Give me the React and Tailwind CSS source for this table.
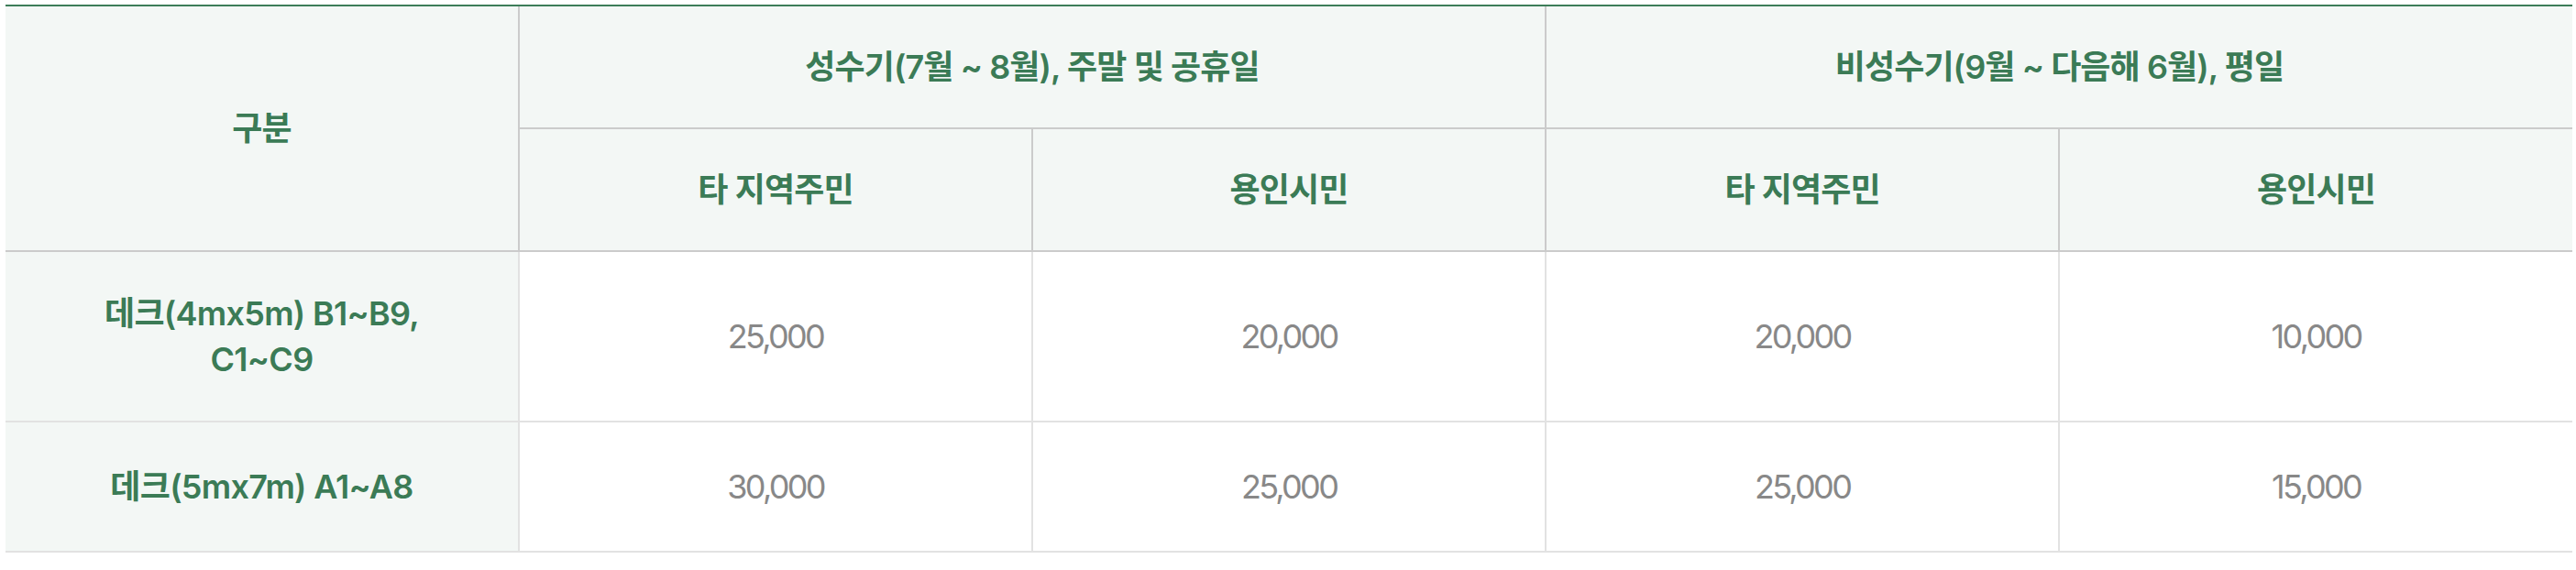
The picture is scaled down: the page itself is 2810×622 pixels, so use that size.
import React from "react";

const font = { fontFamily: '"Inter", "Noto Sans CJK KR", sans-serif' };

export default function App() {
  const thHead =
    "bg-[#f3f7f5] text-[#3b7b56] font-semibold text-[36px] leading-[1.4] tracking-[-0.025em] text-center align-middle border-b-2 border-[#cbcbcb]";
  const rowHead =
    "bg-[#f3f7f5] text-[#3b7b56] font-semibold text-[36px] leading-[1.4] tracking-[-0.02em] text-center align-middle border-b-2 border-r-2 border-[#e2e2e2]";
  const td =
    "bg-white text-[#888888] font-normal text-[36px] leading-[1.4] tracking-[-0.075em] text-center align-middle border-b-2 border-[#e2e2e2]";

  return (
    <div className="w-[2810px] h-[622px] bg-white pt-[5px] pl-[6px]" style={font}>
      <table className="w-[2800px] table-fixed border-separate border-spacing-0 border-t-2 border-[#3d7d59]">
        <colgroup>
          <col className="w-[561px]" />
          <col className="w-[560px]" />
          <col className="w-[560px]" />
          <col className="w-[560px]" />
          <col className="w-[559px]" />
        </colgroup>
        <thead>
          <tr className="h-[134px]">
            <th rowSpan={2} className={`${thHead} border-r-2`}>
              구분
            </th>
            <th colSpan={2} className={`${thHead} border-r-2`}>
              성수기(7월 ~ 8월), 주말 및 공휴일
            </th>
            <th colSpan={2} className={thHead}>
              비성수기(9월 ~ 다음해 6월), 평일
            </th>
          </tr>
          <tr className="h-[134px]">
            <th className={`${thHead} border-r-2`}>타 지역주민</th>
            <th className={`${thHead} border-r-2`}>용인시민</th>
            <th className={`${thHead} border-r-2`}>타 지역주민</th>
            <th className={thHead}>용인시민</th>
          </tr>
        </thead>
        <tbody>
          <tr className="h-[186px]">
            <th className={rowHead}>
              데크(4mx5m) B1~B9,
              <br />
              C1~C9
            </th>
            <td className={`${td} border-r-2`}>25,000</td>
            <td className={`${td} border-r-2`}>20,000</td>
            <td className={`${td} border-r-2`}>20,000</td>
            <td className={td}>10,000</td>
          </tr>
          <tr className="h-[142px]">
            <th className={rowHead}>데크(5mx7m) A1~A8</th>
            <td className={`${td} border-r-2`}>30,000</td>
            <td className={`${td} border-r-2`}>25,000</td>
            <td className={`${td} border-r-2`}>25,000</td>
            <td className={td}>15,000</td>
          </tr>
        </tbody>
      </table>
    </div>
  );
}
